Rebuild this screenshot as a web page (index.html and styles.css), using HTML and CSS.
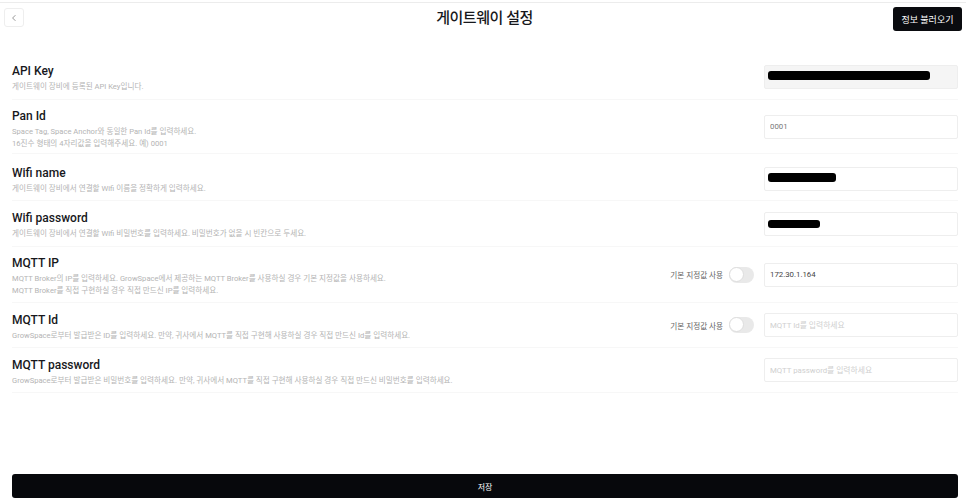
FILE: index.html
```html
<!DOCTYPE html>
<html lang="ko">
<head>
    <meta charset="UTF-8">
    <meta name="viewport" content="width=device-width, initial-scale=1.0">
    <title>게이트웨이 설정</title>
    <link rel="stylesheet" href="styles.css">
</head>
<body>
    <div class="page">
        <header class="top-bar">
            <button class="back-btn" type="button" aria-label="뒤로">
                <svg width="8" height="8" viewBox="0 0 8 8" fill="none"><path d="M5.4 1.2 2.6 4l2.8 2.8" stroke="#8a8a8a" stroke-width="0.9"/></svg>
            </button>
            <h1 class="page-title">게이트웨이 설정</h1>
            <button class="load-btn" type="button">정보 불러오기</button>
        </header>

        <main class="form">
            <div class="row row-key">
                <div class="info">
                    <div class="name">API Key</div>
                    <p class="desc">게이트웨이 장비에 등록된 API Key입니다.</p>
                </div>
                <div class="field">
                    <div class="input-wrap">
                        <input class="input input-disabled" type="text" disabled>
                        <span class="redact redact-key"></span>
                    </div>
                </div>
            </div>

            <div class="row row-pan">
                <div class="info">
                    <div class="name">Pan Id</div>
                    <p class="desc">Space Tag, Space Anchor와 동일한 Pan Id를 입력하세요.<br>16진수 형태의 4자리값을 입력해주세요. 예) 0001</p>
                </div>
                <div class="field">
                    <div class="input-wrap"><input class="input" type="text" value="0001"></div>
                </div>
            </div>

            <div class="row row-wifi">
                <div class="info">
                    <div class="name">Wifi name</div>
                    <p class="desc">게이트웨이 장비에서 연결할 Wifi 이름을 정확하게 입력하세요.</p>
                </div>
                <div class="field">
                    <div class="input-wrap">
                        <input class="input" type="text">
                        <span class="redact redact-name"></span>
                    </div>
                </div>
            </div>

            <div class="row row-wifi-pw">
                <div class="info">
                    <div class="name">Wifi password</div>
                    <p class="desc">게이트웨이 장비에서 연결할 Wifi 비밀번호를 입력하세요. 비밀번호가 없을 시 빈칸으로 두세요.</p>
                </div>
                <div class="field">
                    <div class="input-wrap">
                        <input class="input" type="text">
                        <span class="redact redact-pw"></span>
                    </div>
                </div>
            </div>

            <div class="row row-ip">
                <div class="info">
                    <div class="name">MQTT IP</div>
                    <p class="desc">MQTT Broker의 IP를 입력하세요. GrowSpace에서 제공하는 MQTT Broker를 사용하실 경우 기본 지정값을 사용하세요.<br>MQTT Broker를 직접 구현하실 경우 직접 만드신 IP를 입력하세요.</p>
                </div>
                <div class="field">
                    <span class="switch-label">기본 지정값 사용</span>
                    <span class="switch"><span class="knob"></span></span>
                    <div class="input-wrap"><input class="input input-dark" type="text" value="172.30.1.164"></div>
                </div>
            </div>

            <div class="row row-id">
                <div class="info">
                    <div class="name">MQTT Id</div>
                    <p class="desc">GrowSpace로부터 발급받은 ID를 입력하세요. 만약, 귀사에서 MQTT를 직접 구현해 사용하실 경우 직접 만드신 Id를 입력하세요.</p>
                </div>
                <div class="field">
                    <span class="switch-label">기본 지정값 사용</span>
                    <span class="switch"><span class="knob"></span></span>
                    <div class="input-wrap"><input class="input" type="text" placeholder="MQTT Id를 입력하세요"></div>
                </div>
            </div>

            <div class="row row-pw">
                <div class="info">
                    <div class="name">MQTT password</div>
                    <p class="desc">GrowSpace로부터 발급받은 비밀번호를 입력하세요. 만약, 귀사에서 MQTT를 직접 구현해 사용하실 경우 직접 만드신 비밀번호를 입력하세요.</p>
                </div>
                <div class="field">
                    <div class="input-wrap"><input class="input" type="text" placeholder="MQTT password를 입력하세요"></div>
                </div>
            </div>
        </main>

        <button class="save-btn" type="button">저장</button>
    </div>
</body>
</html>
```

FILE: styles.css
```css
* {
    box-sizing: border-box;
}

body {
    margin: 0;
    background-color: #fff;
    color: #17181c;
    font-family: Roboto, "Noto Sans CJK KR", sans-serif;
    overflow: hidden;
}

.page {
    height: 499px;
    border-top: 1px solid #ececec;
    margin-top: 2px;
    padding: 0 4px 3px 4px;
    display: flex;
    flex-direction: column;
}

.top-bar {
    display: grid;
    grid-template-columns: 1fr auto 1fr;
    align-items: start;
    padding: 4px 0 0;
    height: 51px;
}

.back-btn {
    width: 20px;
    height: 19px;
    margin-top: 1px;
    padding: 0;
    display: flex;
    align-items: center;
    justify-content: center;
    background: #fff;
    border: 1px solid #eee;
    border-radius: 3px;
}

.page-title {
    margin: 0;
    padding-left: 3px;
    font-size: 15px;
    line-height: 22px;
    font-weight: 500;
    letter-spacing: -0.45px;
}

.load-btn {
    justify-self: end;
    width: 69px;
    height: 24px;
    padding: 0;
    background-color: #0a0b0f;
    border: none;
    border-radius: 3px;
    color: #fff;
    font: inherit;
    font-size: 9px;
}

.form {
    padding: 0 4px 0 8px;
}

.row {
    display: flex;
    justify-content: space-between;
    align-items: center;
    border-bottom: 1px solid #f7f7f7;
}

.row-key { height: 46px; }
.row-pan { height: 54px; }
.row-wifi { height: 47px; }
.row-wifi-pw { height: 46px; }
.row-ip { height: 56px; }
.row-id { height: 45px; }
.row-pw { height: 45px; }

.row-key .info { padding-top: 2px; }
.row-pan .info { padding-top: 4px; }
.row-wifi .info { padding-top: 6px; }
.row-wifi-pw .info { padding-top: 3px; }
.row-ip .info { padding-top: 2px; }
.row-id .info { padding-top: 3px; }
.row-pw .info { padding-top: 4px; }

.row-wifi .field { margin-top: 4px; }

.name {
    font-size: 12px;
    line-height: 16px;
    font-weight: 500;
}

.desc {
    margin: 2px 0 0;
    font-size: 7.6px;
    line-height: 11.5px;
    color: #b4b4b4;
}

.field {
    display: flex;
    align-items: center;
    height: 24px;
}

.input-wrap {
    position: relative;
    width: 194px;
    height: 24px;
}

.input {
    display: block;
    width: 100%;
    height: 100%;
    padding: 0 5px;
    background: #fff;
    border: 1px solid #eeeeee;
    border-radius: 2px;
    color: #777;
    font-family: inherit;
    font-size: 7.8px;
}

.input::placeholder {
    color: #cfcfcf;
}

.input-disabled {
    background-color: #f5f5f5;
}

.input-dark {
    color: #444;
}

.redact {
    position: absolute;
    left: 4px;
    background-color: #000;
    border-radius: 3px;
}

.redact-key { top: 6px; width: 162px; height: 9px; }
.redact-name { top: 6px; width: 68px; height: 9px; }
.redact-pw { top: 8px; width: 52px; height: 8px; }

.switch-label {
    margin-right: 6px;
    font-size: 7.6px;
    color: #666;
}

.switch {
    display: block;
    width: 25px;
    height: 16px;
    margin-right: 10px;
    padding: 0;
    background-color: #e9e9e9;
    border-radius: 8px;
}

.knob {
    display: block;
    width: 15px;
    height: 15px;
    background-color: #fff;
    border: 1px solid #ddd;
    border-radius: 50%;
}

.save-btn {
    display: block;
    width: 946px;
    height: 24px;
    margin: auto 0 0 8px;
    padding: 0;
    background-color: #07080c;
    border: none;
    border-radius: 3px;
    color: #fff;
    font: inherit;
    font-size: 8px;
}
```
